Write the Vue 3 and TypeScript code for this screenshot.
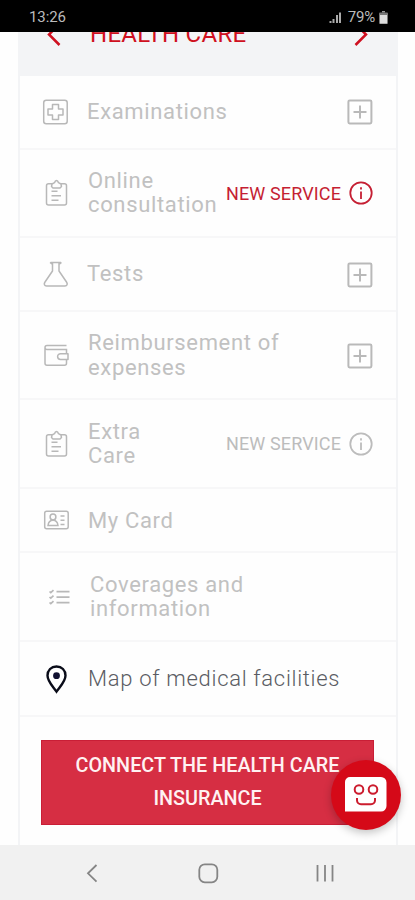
<script setup lang="ts">
type IconName = 'exam' | 'clipboard' | 'flask' | 'wallet' | 'card' | 'list' | 'pin'
type Action = 'plus' | 'info' | 'none'

interface MenuRow {
  key: string
  lines: string[]
  icon: IconName
  action: Action
  tone: string
}

const rows: MenuRow[] = [
  { key: 'examinations', lines: ['Examinations'], icon: 'exam', action: 'plus', tone: 'muted' },
  { key: 'online', lines: ['Online', 'consultation'], icon: 'clipboard', action: 'info', tone: 'muted highlight' },
  { key: 'tests', lines: ['Tests'], icon: 'flask', action: 'plus', tone: 'muted' },
  { key: 'reimbursement', lines: ['Reimbursement of', 'expenses'], icon: 'wallet', action: 'plus', tone: 'muted' },
  { key: 'extra', lines: ['Extra', 'Care'], icon: 'clipboard', action: 'info', tone: 'muted' },
  { key: 'card', lines: ['My Card'], icon: 'card', action: 'none', tone: 'muted' },
  { key: 'coverages', lines: ['Coverages and', 'information'], icon: 'list', action: 'none', tone: 'muted' },
  { key: 'map', lines: ['Map of medical facilities'], icon: 'pin', action: 'none', tone: 'active' },
]
</script>

<template>
  <div class="screen">
    <header class="status">
      <span class="clock">13:26</span>
      <div class="status-right">
        <svg class="signal" width="13" height="13" viewBox="0 0 13 13">
          <path d="M.5 10h2v2h-2zM3.500 8h2v4h-2zM7 4h2v8H7zM10 1.500h2V12h-2z" fill="#aaa" />
        </svg>
        <span class="percent">79%</span>
        <svg class="battery" width="9" height="13" viewBox="0 0 9 13">
          <path d="M3 0h3v1.500H3z" fill="#999" />
          <rect x="0" y="1.500" width="9" height="11.500" rx="1" fill="#777" />
          <rect x="1" y="4" width="7" height="8.500" fill="#ddd" />
        </svg>
      </div>
    </header>

    <main class="content">
      <section class="panel">
        <div class="heading">
          <svg width="14" height="24" viewBox="0 0 14 24"><path d="M12.500 2 2 12.500 12.500 23" /></svg>
          <h1>HEALTH CARE</h1>
          <svg width="14" height="24" viewBox="0 0 14 24"><path d="M1.500 2 12 12.500 1.500 23" /></svg>
        </div>

        <div v-for="row in rows" :key="row.key" class="row" :class="[row.tone, row.key]">
          <svg class="icon" width="28" height="30" viewBox="0 0 28 30">
            <g v-if="row.icon === 'exam'">
              <rect x="1.700" y="3.200" width="23.500" height="23.500" rx="2.500" />
              <path d="M10.500 7.500h6v4.500H21v6h-4.500v4.500h-6V18H6v-6h4.500z" stroke-linejoin="round" />
            </g>
            <g v-else-if="row.icon === 'clipboard'">
              <path d="M10 5.700H6.500a2 2 0 0 0-2 2V25a2 2 0 0 0 2 2h16a2 2 0 0 0 2-2V7.700a2 2 0 0 0-2-2H19" />
              <path d="M9.500 8.500 10 6l2.500-1.300C13 3 13.500 2.500 14.500 2.500s1.500.5 2 2.200L19 6l.5 2.500-1.500 1.500h-7z" stroke-linejoin="round" />
              <path d="M9.500 13.200h6M9.500 17.700h9.500M9.500 22.200h7" />
            </g>
            <g v-else-if="row.icon === 'flask'">
              <path d="M8.500 3.500h10.500M10.500 4v8L3 23c-1.500 2.200-.5 4 1.500 4h18.500c2 0 3-1.800 1.500-4l-7.500-11V4M8 3.500l2.500 1.800M19.500 3.500 17 5.300" stroke-linejoin="round" />
            </g>
            <g v-else-if="row.icon === 'wallet'">
              <path d="M24.500 5.500H5a2 2 0 0 0 0 4h19.500v4.200M3 7.500v15.700a2 2 0 0 0 2 2h17.500a2 2 0 0 0 2-2v-4" />
              <path d="M26 13.700h-7.500a2.900 2.900 0 0 0 0 5.800H26z" stroke-linejoin="round" />
            </g>
            <g v-else-if="row.icon === 'card'">
              <rect x="2.700" y="6.300" width="23.500" height="17.500" rx="2" />
              <circle cx="11" cy="12" r="2.900" />
              <path d="M6 20.500c.5-4.200 2-5.200 5-5.200s4.500 1 5 5.200zM18.500 11h4M18.500 15.200h4M18.500 19.400h4" />
            </g>
            <g v-else-if="row.icon === 'list'" class="checks">
              <path d="M14.500 9.700h13M14.500 15.200h13M14.500 20.700h13" />
              <path d="m7.500 9.500 1.300 1.200 2.700-2.500M7.500 15l1.300 1.200 2.700-2.500M7.500 20.500l1.300 1.200 2.700-2.500" />
            </g>
            <g v-else class="pin">
              <path d="M14.500 2.500c-5.300 0-9 3.700-9 9C5.500 17.500 11 22.500 14.500 27.700 18 22.500 23.500 17.500 23.500 11.500c0-5.300-3.700-9-9-9z" />
              <circle cx="14.500" cy="11.700" r="3.400" />
            </g>
          </svg>

          <div class="label"><span v-for="line in row.lines" :key="line">{{ line }}</span></div>

          <svg v-if="row.action === 'plus'" class="action" width="28" height="28" viewBox="0 0 28 28">
            <rect x="2.400" y="2.400" width="23" height="23" rx="1.300" /><path d="M14 7.500v13M7.500 14h13" />
          </svg>
          <div v-else-if="row.action === 'info'" class="service">
            <span>NEW SERVICE</span>
            <svg width="26" height="26" viewBox="0 0 26 26">
              <circle cx="13" cy="13" r="10.700" /><path d="M13 11.500V19M13 7.300v2.200" />
            </svg>
          </div>
        </div>

        <div class="cta">
          <button type="button"><span class="first">CONNECT THE HEALTH CARE</span><span class="second">INSURANCE</span></button>
        </div>
      </section>
      <button class="chat" type="button" aria-label="Chat">
        <svg width="42" height="36" viewBox="0 0 42 36">
          <path d="M5 0h31a5.500 5.500 0 0 1 5.500 5.500V29a5.500 5.500 0 0 1-5.500 5.500H0V5a5 5 0 0 1 5-5z" fill="#fff" />
          <g fill="none" stroke="#cc1c2e" stroke-width="2"><circle cx="14" cy="12.500" r="4.300" /><circle cx="28" cy="12.500" r="4.300" /><path d="M12 21v2.300a4 4 0 0 0 4 4h10a4 4 0 0 0 4-4V21" /></g>
        </svg>
      </button>
    </main>

    <nav class="navbar">
      <svg width="24" height="24" viewBox="0 0 24 24"><path d="m16.500 4-8.500 8.300 8.500 8.300" /></svg>
      <svg width="24" height="24" viewBox="0 0 24 24"><rect x="3.300" y="3.300" width="18" height="18" rx="5.500" /></svg>
      <svg width="24" height="24" viewBox="0 0 24 24"><path d="M5.500 4v16.500M13 4v16.500M20.500 4v16.500" /></svg>
    </nav>
  </div>
</template>

<style>
body { background: #fff; }
</style>

<style scoped>
* { box-sizing: border-box; }
.screen { width: 415px; height: 900px; display: flex; flex-direction: column; overflow: hidden; font-family: Roboto, sans-serif; background: #fefefe; }
.status { height: 32px; flex: none; background: #000; color: #bbb; padding: 2px 27px 0 29px; display: flex; align-items: center; justify-content: space-between; font-size: 15px; }
.clock { letter-spacing: -.1px; }
.status-right { display: flex; align-items: center; }
.percent { margin-left: 6px; margin-right: 4px; letter-spacing: -.2px; }
.content { position: relative; height: 813px; flex: none; padding: 0 17px 0 18px; overflow: hidden; }
.panel { height: 100%; border-left: 2px solid #f3f4f6; border-right: 2px solid #f3f4f6; }
.heading { height: 44px; overflow: hidden; background: #f3f4f6; color: #cf1020; display: flex; align-items: flex-start; padding: 0 28px 0 27px; }
.heading svg { margin-top: -10px; flex: none; fill: none; stroke: #cf1020; stroke-width: 2.500; }
.heading h1 { flex: 1; margin: -12px 0 0 29px; font-size: 24px; line-height: 28px; font-weight: 400; letter-spacing: .3px; white-space: nowrap; }
.row { display: flex; align-items: center; height: 88px; padding: 0 22px 0 22px; border-bottom: 2px solid #f7f7f8; }
.row.examinations, .row.tests { height: 74px; }
.row.extra, .row.coverages { height: 89px; }
.row.card { height: 64px; }
.row.map { height: 75px; }
.icon { flex: none; fill: none; stroke: #b8b8b8; stroke-width: 1.500; }
.checks { stroke-width: 1.700; }
.pin { stroke: #090b18; stroke-width: 2.400; }
.pin circle { fill: #101030; stroke: none; }
.label { flex: 1; min-width: 0; margin-left: 18px; padding-top: 1px; display: flex; flex-direction: column; font-size: 22px; line-height: 24.500px; letter-spacing: .65px; font-weight: 400; color: #c1c1c1; white-space: nowrap; }
.examinations .label, .tests .label { margin-left: 17px; padding-top: 0; }
.tests .label { padding-top: 1px; }
.online .label { padding-top: 0; }
.card .label { padding-top: 2px; }
.coverages .label { margin-left: 20px; }
.active .label { color: #5a5c63; font-weight: 300; letter-spacing: .7px; }
.action { flex: none; fill: none; stroke: #b9b9b9; stroke-width: 2; }
.tests .action, .reimbursement .action { margin-top: 2px; }
.service { display: flex; align-items: center; flex: none; color: #bcbcbc; font-size: 18px; letter-spacing: .12px; }
.service svg { margin-left: 7px; fill: none; stroke: currentColor; stroke-width: 1.800; }
.highlight .service { color: #c51f33; }
.cta { padding: 23px 22px 0 21px; }
.cta button { display: flex; flex-direction: column; align-items: center; justify-content: center; width: 100%; height: 85px; margin: 0; padding: 0 0 2px; border: 1px solid #c91e36; background: #d62e43; color: #fff2f2; font: 500 19.800px/33px Roboto, sans-serif; }
.chat { position: absolute; left: 331px; top: 728px; width: 70px; height: 70px; border: 0; border-radius: 50%; padding: 0; display: flex; align-items: center; justify-content: center; background: #d50918; box-shadow: 0 3px 9px rgba(0, 0, 0, .23); }
.navbar { height: 55px; flex: none; background: #f1f1f1; display: flex; align-items: center; justify-content: space-between; padding: 0 79px 0 80px; }
.navbar svg { fill: none; stroke: #858585; stroke-width: 1.800; }
</style>
